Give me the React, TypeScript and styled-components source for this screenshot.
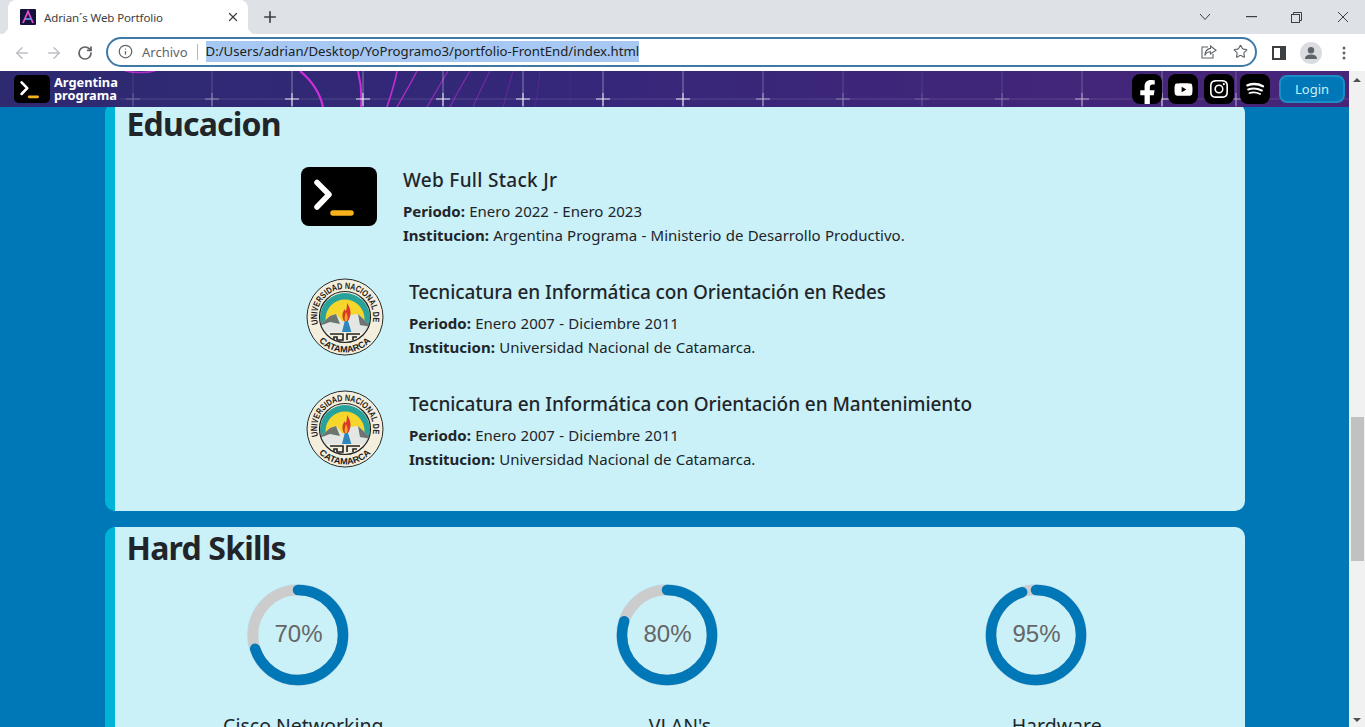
import React from "react";
import styled, { createGlobalStyle } from "styled-components";
import { ArrowLeft, ArrowRight, Info, Plus, RotateCw, Star, X } from "lucide-react";
import { BsInstagram } from "react-icons/bs";
import { FaFacebookF, FaYoutube } from "react-icons/fa";

const GlobalStyle = createGlobalStyle`
   html, body {
      margin: 0;
      height: 100%;
      overflow: hidden;
      background: #0077b6;
   }
   * {
      box-sizing: border-box;
   }
`;

const UI_FONT = `"Noto Sans", "Open Sans", Arial, sans-serif`;

const Screen = styled.div`
   width: 1365px;
   height: 727px;
   display: flex;
   flex-direction: column;
   overflow: hidden;
   font-family: ${UI_FONT};
`;

/* browser chrome */
const TabStrip = styled.div`
   height: 34px;
   flex-shrink: 0;
   background: #dee1e6;
   display: flex;
   align-items: stretch;
   padding-left: 8px;
`;

const Tab = styled.div`
   position: relative;
   width: 240px;
   background: #fff;
   border-radius: 8px 8px 0 0;
   display: flex;
   align-items: center;
   padding: 0 8px 0 12px;
   color: #3c4043;
   font-size: 11.5px;
   letter-spacing: -0.1px;

   &::before,
   &::after {
      content: "";
      position: absolute;
      bottom: 0;
      width: 8px;
      height: 8px;
   }
   &::before {
      left: -8px;
      background: radial-gradient(circle at 0 0, #dee1e6 8px, #fff 8.5px);
   }
   &::after {
      right: -8px;
      background: radial-gradient(circle at 100% 0, #dee1e6 8px, #fff 8.5px);
   }
`;

const TabTitle = styled.span`
   margin-left: 8px;
   flex: 1;
   white-space: nowrap;
`;

const NewTab = styled.div`
   margin-left: 13px;
   display: flex;
   align-items: center;
   color: #3c4043;
`;

const WindowControls = styled.div`
   margin-left: auto;
   display: flex;
   align-items: center;
   color: #3c4043;
`;

const WindowButton = styled.div<{ $width: number }>`
   width: ${(p) => p.$width}px;
   display: flex;
   justify-content: center;
`;

const Toolbar = styled.div`
   height: 37px;
   flex-shrink: 0;
   background: #fff;
   display: flex;
   align-items: center;
   padding-left: 13px;
`;

const NavButton = styled.div<{ $width: number; $color: string }>`
   width: ${(p) => p.$width}px;
   display: flex;
   color: ${(p) => p.$color};
`;

const Omnibox = styled.div`
   width: 1151px;
   height: 30px;
   margin-left: 5px;
   margin-top: -2px;
   border: 2px solid #3f7aa6;
   border-radius: 15px;
   display: flex;
   align-items: center;
   padding-left: 10px;
   padding-right: 7px;
   color: #5f6368;
`;

const SchemeLabel = styled.span`
   margin-left: 9px;
   font-size: 13px;
`;

const Divider = styled.span`
   width: 1px;
   height: 16px;
   background: #b4b7bb;
   margin: 0 8px 0 9px;
`;

const SelectedUrl = styled.span`
   background: #a6c8f2;
   color: #202124;
   font-size: 13.2px;
   line-height: 21px;
   white-space: nowrap;
`;

const OmniActions = styled.div`
   margin-left: auto;
   display: flex;
   align-items: center;
   gap: 16px;
`;

const ToolActions = styled.div`
   display: flex;
   align-items: center;
   margin-left: 15px;
`;

const Avatar = styled.div`
   width: 22px;
   height: 22px;
   margin: 0 20px 0 14px;
   border-radius: 50%;
   background: #dadce0;
   display: flex;
   align-items: center;
   justify-content: center;
`;

/* page */
const Viewport = styled.div`
   flex: 1;
   display: flex;
   min-height: 0;
`;

const PageColumn = styled.div`
   width: 1349px;
   display: flex;
   flex-direction: column;
   min-height: 0;
`;

const SiteNav = styled.nav`
   position: relative;
   height: 36px;
   flex-shrink: 0;
   background: linear-gradient(90deg, #2d2a70 0%, #35277a 40%, #482578 100%);
   display: flex;
   align-items: center;
   padding: 0 4px 0 14px;
   overflow: hidden;
   z-index: 1;
`;

const NavArt = styled.svg`
   position: absolute;
   inset: 0;
`;

const Brand = styled.div`
   position: relative;
   display: flex;
   align-items: center;
   gap: 4px;
`;

const BrandText = styled.span`
   color: #fff;
   font-size: 12.8px;
   font-weight: 700;
   line-height: 13px;
`;

const Socials = styled.div`
   position: relative;
   margin-left: auto;
   display: flex;
   align-items: center;
   gap: 6px;
`;

const SocialIcon = styled.a<{ $align?: string }>`
   width: 30px;
   height: 30px;
   border-radius: 8px;
   background: #000;
   color: #fff;
   display: flex;
   justify-content: center;
   align-items: ${(p) => p.$align ?? "center"};
   overflow: hidden;
`;

const LoginButton = styled.button`
   position: relative;
   width: 66px;
   height: 28px;
   margin-left: 3px;
   border: 2px solid #1b8ec7;
   border-radius: 8px;
   background: #0077b6;
   color: #caf0f8;
   font-family: inherit;
   font-size: 13px;
   padding: 0;
`;

const Main = styled.main`
   flex: 1;
   min-height: 0;
   overflow: hidden;
   background: #0077b6;
   padding: 0 104px 0 105px;
`;

const Stack = styled.div`
   margin-top: -4px;
   display: flex;
   flex-direction: column;
   gap: 16px;
`;

const Card = styled.section`
   background: #caf0f8;
   border-left: 10px solid #00b4d8;
   border-radius: 10px;
   padding: 2px 0 0 0;
`;

const CardTitle = styled.h2`
   margin: 0 0 0 11.5px;
   color: #212529;
   font-size: 32px;
   line-height: 38px;
   font-weight: 700;
   letter-spacing: -0.8px;
`;

const EducationList = styled.div`
   margin-top: 25px;
   padding: 0 0 40px 186px;
   display: flex;
   flex-direction: column;
   gap: 33px;
`;

const EducationRow = styled.article`
   display: flex;
   align-items: flex-start;
`;

const LogoSlot = styled.div<{ $inset: number; $top: number; $width: number }>`
   width: ${(p) => p.$width}px;
   padding-left: ${(p) => p.$inset}px;
   margin-top: ${(p) => p.$top}px;
   flex-shrink: 0;
   display: flex;
`;

const EducationTitle = styled.h3<{ $tracking: number }>`
   margin: 0 0 7px;
   color: #212529;
   font-size: 19px;
   line-height: 24px;
   font-weight: 500;
   letter-spacing: ${(p) => p.$tracking}px;
`;

const EducationLine = styled.p`
   margin: 0;
   color: #212529;
   font-size: 15px;
   line-height: 24px;
   word-spacing: 0.4px;

   b {
      font-weight: 700;
   }
`;

const RingRow = styled.div`
   display: flex;
   gap: 267px;
   padding-left: 132px;
   margin-top: 17px;
`;

const SkillLabels = styled.div`
   display: grid;
   grid-template-columns: repeat(3, 1fr);
   margin-top: 28px;
`;

const SkillLabel = styled.div`
   text-align: center;
   color: #212529;
   font-size: 19.5px;
   line-height: 24px;
`;

const Scrollbar = styled.div`
   width: 16px;
   flex-shrink: 0;
   background: #f1f1f1;
   display: flex;
   flex-direction: column;
   align-items: center;
   padding: 7px 0 5px 0;
`;

const ScrollArrow = styled.div<{ $down?: boolean }>`
   width: 0;
   height: 0;
   border-left: 4px solid transparent;
   border-right: 4px solid transparent;
   ${(p) => (p.$down ? "border-top: 4px solid #505050; margin-top: auto;" : "border-bottom: 4px solid #505050;")}
`;

const ScrollThumb = styled.div`
   width: 13px;
   height: 144px;
   margin-top: 335px;
   background: #c1c1c1;
`;

/* drawings */
const Favicon = () => (
   <svg width="16" height="16" viewBox="0 0 16 16">
      <rect width="16" height="16" rx="1" fill="#14123c" />
      <path d="M3 14 L8 2.5 L13 14" fill="none" stroke="#e24fd0" strokeWidth="1.8" />
      <path d="M5 10 H11" stroke="#5aa4f0" strokeWidth="1.6" />
   </svg>
);

const TerminalLogo: React.FC<{ width: number; height: number; radius: number }> = (props) => (
   <svg width={props.width} height={props.height} viewBox="0 0 76 59" preserveAspectRatio="none">
      <rect width="76" height="59" rx={props.radius} fill="#000" />
      <polyline
         points="16,15.5 28,27.5 16,40"
         fill="none"
         stroke="#fff"
         strokeWidth="5.5"
         strokeLinecap="round"
         strokeLinejoin="round"
      />
      <line x1="32" y1="46" x2="50" y2="46" stroke="#f7b21b" strokeWidth="5.5" strokeLinecap="round" />
   </svg>
);

const UncaLogo = () => (
   <svg width="78" height="78" viewBox="0 0 78 78">
      <defs>
         <path id="unca-top" d="M12 46.2 A28 28 0 1 1 66.6 43.9" />
         <path id="unca-bottom" d="M13 63.2 A35.5 35.5 0 0 0 65 63.2" />
         <clipPath id="unca-inner">
            <circle cx="39" cy="39" r="25" />
         </clipPath>
      </defs>
      <circle cx="39" cy="39" r="38" fill="#f4eedc" stroke="#2a2a2a" strokeWidth="1" />
      <text fontFamily="Liberation Sans, Arial, sans-serif" fontSize="9" fontWeight="700" fill="#1c1c1c">
         <textPath href="#unca-top" textLength="100" lengthAdjust="spacingAndGlyphs">
            UNIVERSIDAD NACIONAL DE
         </textPath>
      </text>
      <text fontFamily="Liberation Sans, Arial, sans-serif" fontSize="9" fontWeight="700" fill="#1c1c1c">
         <textPath href="#unca-bottom" textLength="58" lengthAdjust="spacingAndGlyphs">
            CATAMARCA
         </textPath>
      </text>
      <g clipPath="url(#unca-inner)">
         <rect x="10" y="10" width="58" height="58" fill="#f4eedc" />
         <circle cx="39" cy="40" r="25" fill="#27a39b" />
         <circle cx="39" cy="41" r="19.5" fill="#f6d62a" />
         <path d="M13 48 L24 38 L30 36 L37 44 L44 37 L52 36 L66 49 L66 56 L13 56 Z" fill="#e4e6e4" />
         <path d="M13 48 L24 38 L30 36 L34 46 L24 44 Z" fill="#6d7570" />
         <path d="M52 36 L66 49 L54 47 Z" fill="#6d7570" />
         <path d="M39 42 L36 54 L46 56 L42 43 Z" fill="#2d86bd" />
         <path d="M41 25 C45 31 46 37 42 43 L38 43 C35 38 37 33 39 31 C39 35 41 33 41 25 Z" fill="#d8362a" />
         <path d="M40 34 C42 37 42 40 41 43 L39 43 C38 40 39 37 40 34 Z" fill="#f2a41f" />
         <rect x="12" y="54" width="54" height="12" fill="#f4eedc" />
         <path d="M24 56 H37 V62 H31 V59 H28 V62 M41 62 V56 H54 M47 62 V59 H51" fill="none" stroke="#222" strokeWidth="1.6" />
      </g>
      <circle cx="39" cy="39" r="25.5" fill="none" stroke="#222" strokeWidth="1.2" />
   </svg>
);

const Ring: React.FC<{ percent: number }> = (props) => (
   <svg width="102" height="102" viewBox="0 0 102 102">
      <circle cx="51" cy="51" r="50.5" fill="none" stroke="#b9dcee" strokeWidth="1" />
      <circle cx="51" cy="51" r="45" fill="none" stroke="#cccccc" strokeWidth="10.5" />
      <circle
         cx="51"
         cy="51"
         r="45"
         fill="none"
         stroke="#0077b6"
         strokeWidth="10.5"
         strokeLinecap="round"
         pathLength={100}
         strokeDasharray={`${props.percent} 100`}
         transform="rotate(-90 51 51)"
      />
      <text
         x="51.5"
         y="58"
         textAnchor="middle"
         fontFamily="Liberation Sans, Arial, sans-serif"
         fontSize="24"
         fill="#666666"
      >
         {props.percent}%
      </text>
   </svg>
);

const SpotifyBars = () => (
   <svg width="20" height="16" viewBox="0 0 24 20" fill="none" stroke="#fff" strokeLinecap="round">
      <path d="M2.5 5.5 C9 3 16 3.5 22 6.5" strokeWidth="3" />
      <path d="M3.5 10.5 C9 8.8 15 9.2 20.5 11.8" strokeWidth="2.6" />
      <path d="M5 15 C9.5 13.8 14 14.2 18.5 16.2" strokeWidth="2.2" />
   </svg>
);

const crosses = [
   { x: 133, o: 0.25 },
   { x: 212, o: 0.45 },
   { x: 292, o: 0.9 },
   { x: 363, o: 0.9 },
   { x: 443, o: 0.9 },
   { x: 523, o: 0.95 },
   { x: 603, o: 0.9 },
   { x: 683, o: 0.95 },
   { x: 763, o: 0.6 },
   { x: 843, o: 0.35 },
   { x: 922, o: 0.2 },
   { x: 1002, o: 0.3 },
   { x: 1082, o: 0.6 },
   { x: 1162, o: 0.8 },
   { x: 1236, o: 0.5 },
];

const arcs = [
   { d: "M125 0 Q140 3 155 0", w: 1.5, o: 0.8 },
   { d: "M300 0 C312 10 320 22 323 36", w: 2.2, o: 0.95 },
   { d: "M358 0 C361 12 362 24 361 36", w: 2, o: 0.95 },
   { d: "M397 0 C395 12 391 24 387 36", w: 1.6, o: 0.85 },
   { d: "M417 0 C411 12 404 24 397 36", w: 1.4, o: 0.7 },
   { d: "M448 0 C441 12 434 24 427 36", w: 1.3, o: 0.55 },
   { d: "M470 0 C463 12 456 24 450 36", w: 1.2, o: 0.5 },
   { d: "M490 0 C484 12 478 24 473 36", w: 1.1, o: 0.4 },
   { d: "M513 0 C510 12 506 24 503 36", w: 1, o: 0.3 },
   { d: "M540 0 C539 12 537 24 535 36", w: 1, o: 0.2 },
   { d: "M570 0 V36", w: 1, o: 0.1 },
];

const NavBackdrop = () => (
   <NavArt width="1349" height="36" viewBox="0 0 1349 36">
      <line x1="120" y1="28" x2="1349" y2="28" stroke="#fff" strokeOpacity="0.14" />
      {arcs.map((a) => (
         <path key={a.d} d={a.d} fill="none" stroke="#d92ee0" strokeWidth={a.w} opacity={a.o} />
      ))}
      {crosses.map((c) => (
         <g key={c.x} stroke="#fff" opacity={c.o}>
            <line x1={c.x} y1="0" x2={c.x} y2="36" strokeOpacity="0.45" />
            <line x1={c.x} y1="22" x2={c.x} y2="35" />
            <line x1={c.x - 7} y1="28" x2={c.x + 7} y2="28" />
         </g>
      ))}
   </NavArt>
);

const education = [
   {
      title: "Web Full Stack Jr",
      tracking: 0.3,
      period: "Enero 2022 - Enero 2023",
      school: "Argentina Programa - Ministerio de Desarrollo Productivo.",
      logo: <TerminalLogo width={76} height={59} radius={8} />,
      slot: { $inset: 0, $top: -1, $width: 102 },
   },
   {
      title: "Tecnicatura en Informática con Orientación en Redes",
      tracking: -0.08,
      period: "Enero 2007 - Diciembre 2011",
      school: "Universidad Nacional de Catamarca.",
      logo: <UncaLogo />,
      slot: { $inset: 5, $top: -2, $width: 108 },
   },
   {
      title: "Tecnicatura en Informática con Orientación en Mantenimiento",
      tracking: -0.06,
      period: "Enero 2007 - Diciembre 2011",
      school: "Universidad Nacional de Catamarca.",
      logo: <UncaLogo />,
      slot: { $inset: 5, $top: -2, $width: 108 },
   },
];

const App: React.FC = () => {
   return (
      <Screen>
         <GlobalStyle />
         <TabStrip>
            <Tab>
               <Favicon />
               <TabTitle>Adrian´s Web Portfolio</TabTitle>
               <X size={14} strokeWidth={2.2} />
            </Tab>
            <NewTab>
               <Plus size={18} strokeWidth={2.2} />
            </NewTab>
            <WindowControls>
               <WindowButton $width={52}>
                  <svg width="12" height="8" viewBox="0 0 12 8" fill="none" stroke="#3c4043">
                     <path d="M1 1 L6 6.5 L11 1" />
                  </svg>
               </WindowButton>
               <WindowButton $width={40}>
                  <svg width="11" height="2" viewBox="0 0 11 2">
                     <rect width="11" height="1.2" fill="#3c4043" />
                  </svg>
               </WindowButton>
               <WindowButton $width={50}>
                  <svg width="11" height="11" viewBox="0 0 11 11" fill="none" stroke="#3c4043">
                     <rect x="0.5" y="2.5" width="8" height="8" />
                     <path d="M2.5 2.5 V0.5 H10.5 V8.5 H8.5" />
                  </svg>
               </WindowButton>
               <WindowButton $width={44}>
                  <svg width="12" height="12" viewBox="0 0 12 12" stroke="#3c4043">
                     <path d="M1 1 L11 11 M11 1 L1 11" />
                  </svg>
               </WindowButton>
            </WindowControls>
         </TabStrip>

         <Toolbar>
            <NavButton $width={32} $color="#bcbfc3">
               <ArrowLeft size={18} />
            </NavButton>
            <NavButton $width={32} $color="#bcbfc3">
               <ArrowRight size={18} />
            </NavButton>
            <NavButton $width={24} $color="#5f6368">
               <RotateCw size={16} strokeWidth={2.6} />
            </NavButton>
            <Omnibox>
               <Info size={15} />
               <SchemeLabel>Archivo</SchemeLabel>
               <Divider />
               <SelectedUrl>D:/Users/adrian/Desktop/YoProgramo3/portfolio-FrontEnd/index.html</SelectedUrl>
               <OmniActions>
                  <svg width="16" height="14" viewBox="0 0 16 14" fill="none" stroke="#5f6368" strokeWidth="1.1">
                     <path d="M7 2 H1 V13 H12 V9" />
                     <path d="M9.5 1 L15 5.2 L9.5 9 V6.8 C7 6.8 5 8 3.8 10.5 C4 6.8 6.2 3.8 9.5 3.4 Z" />
                  </svg>
                  <Star size={15} strokeWidth={1.8} />
               </OmniActions>
            </Omnibox>
            <ToolActions>
               <svg width="14" height="14" viewBox="0 0 14 14">
                  <rect x="1" y="1" width="12" height="12" fill="none" stroke="#3c4043" strokeWidth="2" />
                  <rect x="8" y="1" width="5" height="12" fill="#3c4043" />
               </svg>
               <Avatar>
                  <svg width="14" height="14" viewBox="0 0 14 14" fill="#5f6368">
                     <circle cx="7" cy="4.2" r="3.2" />
                     <path d="M1 13 C1 9.6 4 8.6 7 8.6 C10 8.6 13 9.6 13 13 Z" />
                  </svg>
               </Avatar>
               <svg width="4" height="14" viewBox="0 0 4 14" fill="#5f6368">
                  <circle cx="2" cy="2" r="1.5" />
                  <circle cx="2" cy="7" r="1.5" />
                  <circle cx="2" cy="12" r="1.5" />
               </svg>
            </ToolActions>
         </Toolbar>

         <Viewport>
            <PageColumn>
               <SiteNav>
                  <NavBackdrop />
                  <Brand>
                     <TerminalLogo width={36} height={28} radius={10} />
                     <BrandText>
                        Argentina
                        <br />
                        programa
                     </BrandText>
                  </Brand>
                  <Socials>
                     <SocialIcon $align="flex-end">
                        <FaFacebookF size={27} style={{ marginBottom: -3 }} />
                     </SocialIcon>
                     <SocialIcon>
                        <FaYoutube size={19} />
                     </SocialIcon>
                     <SocialIcon>
                        <BsInstagram size={18} />
                     </SocialIcon>
                     <SocialIcon>
                        <SpotifyBars />
                     </SocialIcon>
                     <LoginButton>Login</LoginButton>
                  </Socials>
               </SiteNav>
               <Main>
                  <Stack>
                     <Card>
                        <CardTitle>Educacion</CardTitle>
                        <EducationList>
                           {education.map((item) => (
                              <EducationRow key={item.title}>
                                 <LogoSlot {...item.slot}>{item.logo}</LogoSlot>
                                 <div>
                                    <EducationTitle $tracking={item.tracking}>{item.title}</EducationTitle>
                                    <EducationLine>
                                       <b>Periodo:</b> {item.period}
                                    </EducationLine>
                                    <EducationLine>
                                       <b>Institucion:</b> {item.school}
                                    </EducationLine>
                                 </div>
                              </EducationRow>
                           ))}
                        </EducationList>
                     </Card>
                     <Card>
                        <CardTitle>Hard Skills</CardTitle>
                        <RingRow>
                           <Ring percent={70} />
                           <Ring percent={80} />
                           <Ring percent={95} />
                        </RingRow>
                        <SkillLabels>
                           <SkillLabel>Cisco Networking</SkillLabel>
                           <SkillLabel>VLAN's</SkillLabel>
                           <SkillLabel>Hardware</SkillLabel>
                        </SkillLabels>
                     </Card>
                  </Stack>
               </Main>
            </PageColumn>
            <Scrollbar>
               <ScrollArrow />
               <ScrollThumb />
               <ScrollArrow $down />
            </Scrollbar>
         </Viewport>
      </Screen>
   );
};

export default App;
